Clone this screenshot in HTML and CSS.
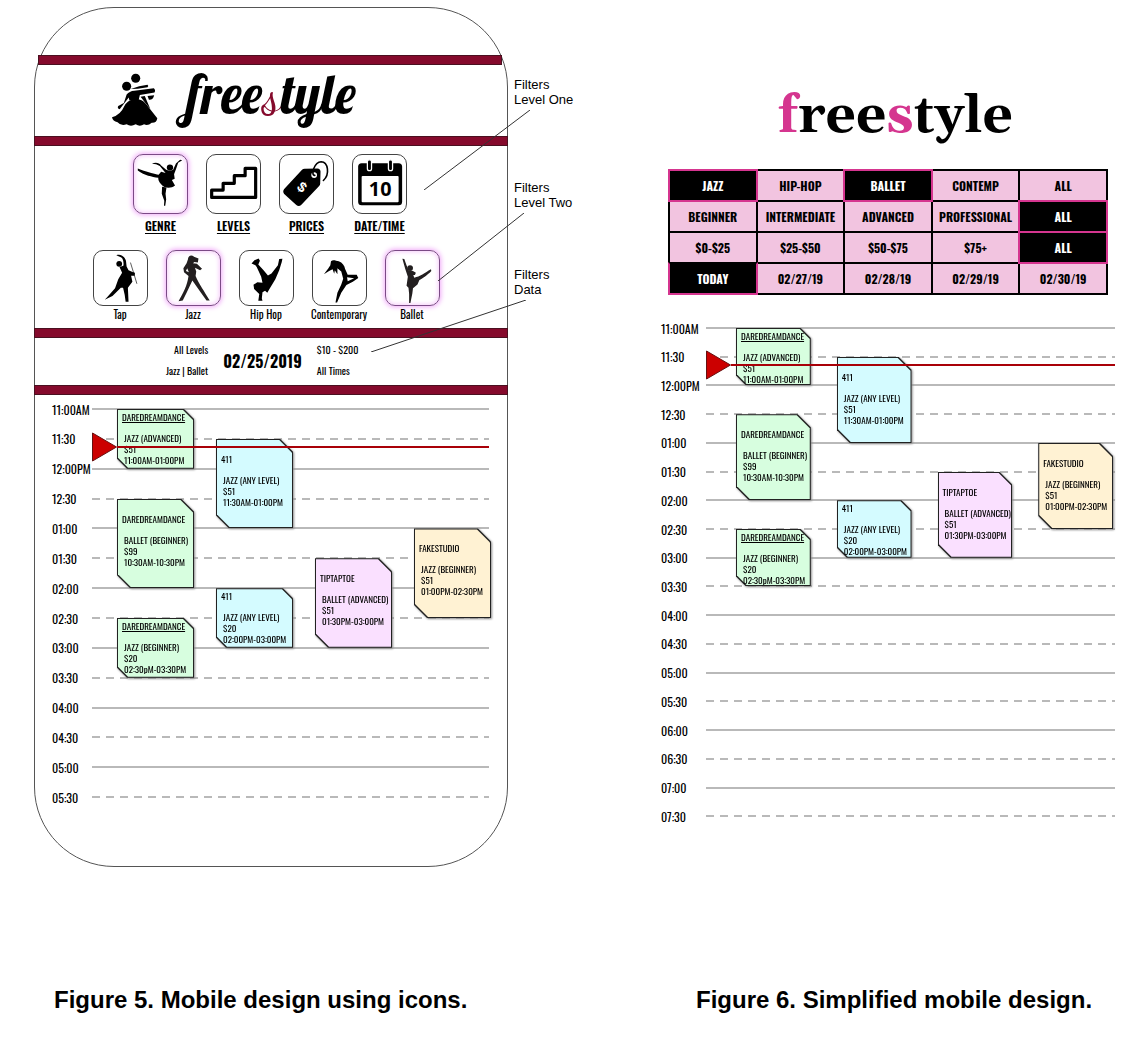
FILE: index.html
```html
<!DOCTYPE html>
<html lang="en">
<head>
<meta charset="utf-8">
<meta name="viewport" content="width=device-width, initial-scale=1">
<title>Freestyle mobile designs</title>
<link rel="stylesheet" href="styles.css">
</head>
<body>
<main class="figures">

  <figure class="figure figure-icons">
    <div class="device-wrap">
      <section class="phone">
        <div class="band band-top"></div>
        <header class="brand">
          <svg class="brand-mark" viewBox="248 224 132 152" aria-hidden="true">
            <circle cx="316" cy="239" r="13"/><circle cx="290" cy="262" r="13"/>
            <path d="M284 318C294 302 310 296 326 300Q340 304 348 316L378 354Q376 368 362 367Q350 377 340 371Q328 379 316 371Q302 379 290 371Q274 377 264 365Q250 363 248 351Q272 345 284 318Z"/>
            <path d="M302 270L326 262 350 258Q354 262 350 265L322 269Z"/>
            <path d="M290 286Q298 276 312 275L368 268Q374 273 370 280L328 287 324 303 298 303 296 294 270 328Q262 326 266 319L282 310Z"/>
            <path d="M330 292L342 290 358 327 346 313ZM350 290L369 288Q366 302 354 301Z"/>
          </svg>
          <h1 class="script-logo">free<span>s</span>tyle</h1>
        </header>
        <div class="band"></div>

        <div class="filters">
          <div class="filter-row main-filters">
            <button class="filter selected" type="button" aria-pressed="true">
              <svg class="tile" viewBox="144 28 168 182" aria-hidden="true">
                <circle cx="258" cy="67" r="10"/>
                <path d="M201 55C212 49 224 52 230 60L246 74 258 78 268 74 277 54 290 42 297 44 284 52 277 72 271 88 273 102 264 106 274 124C262 134 240 134 230 120 223 112 220 104 221 99 200 96 178 92 156 76L156 70 166 74C190 82 210 88 222 90L230 80 244 84 226 62 214 56Z"/>
                <path d="M233 128L247 130 244 150 246 168 243 188 239 188 240 172 232 150Z"/>
              </svg>
              <span>GENRE</span>
            </button>
            <button class="filter" type="button" aria-pressed="false">
              <svg class="tile" viewBox="364 28 163 182" aria-hidden="true">
                <path class="stairs" d="M377 161V138H413V117H448V93H482V70H515V161Z"/>
              </svg>
              <span>LEVELS</span>
            </button>
            <button class="filter" type="button" aria-pressed="false">
              <svg class="tile" viewBox="45 28 162 182" aria-hidden="true">
                <path d="M112 74Q115 71 120 71L160 70Q170 71 170 80L169 118Q169 122 165 126L110 184Q102 191 94 185L56 150Q50 143 56 135Z"/>
                <circle class="paper" cx="150" cy="91" r="9"/>
                <path class="ring" d="M152 92C138 92 150 50 172 49C194 50 200 88 179 108"/>
                <text class="price-sign" x="0" y="15" transform="translate(112 129) rotate(40)">$</text>
              </svg>
              <span>PRICES</span>
            </button>
            <button class="filter" type="button" aria-pressed="false">
              <svg class="tile" viewBox="259 28 162 182" aria-hidden="true">
                <rect x="273" y="54" width="138" height="132" rx="11"/>
                <rect class="paper" x="284" y="94" width="116" height="82" rx="3"/>
                <rect class="peg" x="302" y="43" width="13" height="34" rx="6"/>
                <rect class="peg" x="368" y="43" width="13" height="34" rx="6"/>
                <text class="day" x="342" y="158">10</text>
              </svg>
              <span>DATE/TIME</span>
            </button>
          </div>

          <div class="filter-row genre-filters">
            <button class="filter" type="button" aria-pressed="false">
              <svg class="tile" viewBox="26 316 162 168" aria-hidden="true">
                <circle cx="103" cy="356" r="9"/>
                <path d="M94 329C106 324 120 332 124 346L126 364 132 376 146 382 152 384 151 393 140 393 144 412 130 430 132 474 123 474 120 452 115 430 108 430 82 456 58 468 66 459 90 432 100 404 112 384 104 366 116 362C118 350 114 336 106 335Z"/>
                <path class="stick" d="M138 352L149 388 158 418"/>
              </svg>
              <span>Tap</span>
            </button>
            <button class="filter selected" type="button" aria-pressed="true">
              <svg class="tile soft-ink" viewBox="244 316 163 168" aria-hidden="true">
                <circle cx="319" cy="342" r="10"/>
                <path d="M311 334Q318 326 327 334L341 339 339 352 328 350 324 354 336 356 352 371 346 376 330 368 334 380 332 394C342 418 362 446 372 464L376 470 366 470 346 442 322 408 304 446 292 470 279 472C294 446 306 424 310 394L296 382 294 370 304 354Z"/>
                <path class="paper" d="M306 370L311 382 302 378Z"/>
              </svg>
              <span>Jazz</span>
            </button>
            <button class="filter" type="button" aria-pressed="false">
              <svg class="tile" viewBox="461 316 163 168" aria-hidden="true">
                <path d="M496 355L505 345 518 339 522 346 517 358 532 374 547 392 558 386 578 360 582 341 592 340 590 350 582 376 570 404 554 430 545 446 538 440 530 444 528 464 530 471 517 471 520 450 504 434 502 421 514 413 530 415 526 396 512 366 508 360Z"/>
              </svg>
              <span>Hip Hop</span>
            </button>
            <button class="filter" type="button" aria-pressed="false">
              <svg class="tile" viewBox="139 316 163 168" aria-hidden="true">
                <path fill-rule="evenodd" d="M194 348C200 342 210 347 218 348 230 352 236 362 238 372L246 390 274 390 279 400 262 412 242 422 226 446 213 476 208 476 214 446 226 420 232 402 226 380 214 370 214 388 206 376 204 387 199 373 188 378 172 388 186 370 192 360ZM244 398L246 410 266 401Z"/>
              </svg>
              <span>Contemporary</span>
            </button>
            <button class="filter selected" type="button" aria-pressed="true">
              <svg class="tile soft-ink" viewBox="357 316 163 168" aria-hidden="true">
                <circle cx="431" cy="369" r="9"/>
                <path d="M407 340L413 341 419 358 426 376 440 378 449 384 446 391 441 391 444 399C462 396 476 384 496 373L497 378C484 392 468 402 460 406L454 420 440 432 438 448 432 478 428 478 428 450 426 430 420 424 424 396 416 372Z"/>
              </svg>
              <span>Ballet</span>
            </button>
          </div>
        </div>
        <div class="band"></div>

        <div class="summary">
          <div class="summary-side summary-left"><span>All Levels</span><span>Jazz | Ballet</span></div>
          <strong>02/25/2019</strong>
          <div class="summary-side"><span>$10 - $200</span><span>All Times</span></div>
        </div>
        <div class="band"></div>

        <div class="schedule">
          <ol class="slots">
            <li>11:00AM</li><li>11:30</li><li>12:00PM</li><li>12:30</li><li>01:00</li><li>01:30</li><li>02:00</li>
            <li>02:30</li><li>03:00</li><li>03:30</li><li>04:00</li><li>04:30</li><li>05:00</li><li>05:30</li>
          </ol>
          <div class="events">
            <article class="card green short linked col-1 at-1100"><h3>DAREDREAMDANCE</h3><p>JAZZ (ADVANCED)<br>$51<br>11:00AM-01:00PM</p></article>
            <article class="card blue col-2 at-1130"><h3>411</h3><p>JAZZ (ANY LEVEL)<br>$51<br>11:30AM-01:00PM</p></article>
            <article class="card green col-1 at-1230"><h3>DAREDREAMDANCE</h3><p>BALLET (BEGINNER)<br>$99<br>10:30AM-10:30PM</p></article>
            <article class="card yellow col-4 at-0100"><h3>FAKESTUDIO</h3><p>JAZZ (BEGINNER)<br>$51<br>01:00PM-02:30PM</p></article>
            <article class="card violet col-3 at-0130"><h3>TIPTAPTOE</h3><p>BALLET (ADVANCED)<br>$51<br>01:30PM-03:00PM</p></article>
            <article class="card blue short col-2 at-0200"><h3>411</h3><p>JAZZ (ANY LEVEL)<br>$20<br>02:00PM-03:00PM</p></article>
            <article class="card green short linked col-1 at-0230"><h3>DAREDREAMDANCE</h3><p>JAZZ (BEGINNER)<br>$20<br>02:30pM-03:30PM</p></article>
          </div>
          <div class="now"><svg viewBox="0 0 25 30" aria-hidden="true"><path d="M.5 1L24.5 15 .5 29Z"/></svg></div>
        </div>
      </section>

      <aside class="callouts">
        <p class="callout">Filters<br>Level One<svg class="lead lead-one" viewBox="0 0 106 80" aria-hidden="true"><path d="M106 0L0 80"/></svg></p>
        <p class="callout">Filters<br>Level Two<svg class="lead lead-two" viewBox="0 0 86 68" aria-hidden="true"><path d="M86 0L0 68"/></svg></p>
        <p class="callout">Filters<br>Data<svg class="lead lead-data" viewBox="0 0 155 52" aria-hidden="true"><path d="M155 0L0 52"/></svg></p>
      </aside>
    </div>
    <figcaption>Figure 5. Mobile design using icons.</figcaption>
  </figure>

  <figure class="figure figure-simple">
    <h1 class="serif-logo"><span>f</span>ree<span>s</span>tyle</h1>
    <div class="options">
      <button type="button" aria-pressed="true">JAZZ</button>
      <button type="button" aria-pressed="false">HIP-HOP</button>
      <button type="button" aria-pressed="true">BALLET</button>
      <button type="button" aria-pressed="false">CONTEMP</button>
      <button type="button" aria-pressed="false">ALL</button>
      <button type="button" aria-pressed="false">BEGINNER</button>
      <button type="button" aria-pressed="false">INTERMEDIATE</button>
      <button type="button" aria-pressed="false">ADVANCED</button>
      <button type="button" aria-pressed="false">PROFESSIONAL</button>
      <button type="button" aria-pressed="true">ALL</button>
      <button type="button" aria-pressed="false">$0-$25</button>
      <button type="button" aria-pressed="false">$25-$50</button>
      <button type="button" aria-pressed="false">$50-$75</button>
      <button type="button" aria-pressed="false">$75+</button>
      <button type="button" aria-pressed="true">ALL</button>
      <button class="today" type="button" aria-pressed="true">TODAY</button>
      <button type="button" aria-pressed="false">02/27/19</button>
      <button type="button" aria-pressed="false">02/28/19</button>
      <button type="button" aria-pressed="false">02/29/19</button>
      <button type="button" aria-pressed="false">02/30/19</button>
    </div>

    <div class="schedule schedule-long">
      <ol class="slots">
        <li>11:00AM</li><li>11:30</li><li>12:00PM</li><li>12:30</li><li>01:00</li><li>01:30</li>
        <li>02:00</li><li>02:30</li><li>03:00</li><li>03:30</li><li>04:00</li><li>04:30</li>
        <li>05:00</li><li>05:30</li><li>06:00</li><li>06:30</li><li>07:00</li><li>07:30</li>
      </ol>
      <div class="events">
        <article class="card green short linked col-1 at-1100"><h3>DAREDREAMDANCE</h3><p>JAZZ (ADVANCED)<br>$51<br>11:00AM-01:00PM</p></article>
        <article class="card blue col-2 at-1130"><h3>411</h3><p>JAZZ (ANY LEVEL)<br>$51<br>11:30AM-01:00PM</p></article>
        <article class="card green col-1 at-1230"><h3>DAREDREAMDANCE</h3><p>BALLET (BEGINNER)<br>$99<br>10:30AM-10:30PM</p></article>
        <article class="card yellow col-4 at-0100"><h3>FAKESTUDIO</h3><p>JAZZ (BEGINNER)<br>$51<br>01:00PM-02:30PM</p></article>
        <article class="card violet col-3 at-0130"><h3>TIPTAPTOE</h3><p>BALLET (ADVANCED)<br>$51<br>01:30PM-03:00PM</p></article>
        <article class="card blue short col-2 at-0200"><h3>411</h3><p>JAZZ (ANY LEVEL)<br>$20<br>02:00PM-03:00PM</p></article>
        <article class="card green short linked col-1 at-0230"><h3>DAREDREAMDANCE</h3><p>JAZZ (BEGINNER)<br>$20<br>02:30pM-03:30PM</p></article>
      </div>
      <div class="now"><svg viewBox="0 0 25 30" aria-hidden="true"><path d="M.5 1L24.5 15 .5 29Z"/></svg></div>
    </div>
    <figcaption>Figure 6. Simplified mobile design.</figcaption>
  </figure>

</main>
</body>
</html>
```
FILE: styles.css
```css
:root {
  --wine: #850a2c;
  --pink: #d5358f;
  --narrow: Oswald, "Roboto Condensed", "Liberation Sans Narrow", Roboto, sans-serif;
}

* { box-sizing: border-box; }

body {
  margin: 0;
  background: #fff;
  color: #000;
  font-family: "Liberation Sans", Arial, sans-serif;
}

h1, h3, p, ol, figure { margin: 0; padding: 0; }
button { font: inherit; color: inherit; cursor: pointer; }

.figures {
  display: grid;
  grid-template-columns: 1fr 1fr;
  padding: 7px 0 24px;
}

.figure { display: flex; flex-direction: column; min-width: 0; }
.figure-icons { padding-left: 34px; }
.figure-simple { padding: 0 33px 0 87px; }

figcaption {
  margin-top: auto;
  font-size: 24px;
  line-height: 28px;
  font-weight: bold;
  white-space: nowrap;
}
.figure-icons figcaption { padding-left: 20px; }
.figure-simple figcaption { padding-left: 35px; }

/* Phone */
.device-wrap { display: flex; gap: 6px; margin-bottom: 119px; }

.phone {
  flex: 1;
  min-width: 0;
  padding: 47px 0 49px;
  border: 1px solid #555;
  border-radius: 80px;
}

.band {
  height: 10px;
  margin: 0 -1px;
  background: var(--wine);
  border: 1px solid #4a1020;
}
.band-top { margin: 0 5px 0 3px; }

.brand {
  display: flex;
  gap: 29px;
  height: 71px;
  padding: 8px 0 0 77px;
}
.brand-mark { width: 46px; height: 53px; }
.script-logo {
  font: 54px/42px Lobster, "Liberation Serif", "Times New Roman", serif;
}
.script-logo span {
  color: var(--wine);
  font-family: "Dancing Script", "Great Vibes", "Lobster Two", "Liberation Serif", cursive;
}

/* Icon filters */
.filters { padding: 8px 0 7px; }
.filter-row { display: grid; justify-content: center; font-family: var(--narrow); }
.main-filters { grid-template-columns: repeat(4, 73px); padding-right: 2px; }
.genre-filters { grid-template-columns: repeat(5, 73px); margin-top: 16px; padding-right: 10px; }

.filter {
  display: flex;
  flex-direction: column;
  align-items: center;
  padding: 0;
  border: 0;
  background: none;
  white-space: nowrap;
}
.tile {
  width: 55px;
  height: 60px;
  border: 1px solid #444;
  border-radius: 10px;
}
.genre-filters .tile { height: 56px; }
.selected .tile {
  border-color: #7b4a86;
  box-shadow: 0 0 5px 1px #f0a8f8, inset 0 0 4px 1px #f6ccfa;
}
.main-filters span {
  margin-top: 4px;
  font-size: 12px;
  line-height: 16px;
  font-weight: 600;
  text-decoration: underline;
  text-underline-offset: 2px;
}
.genre-filters span { margin-top: 1px; font-size: 11px; line-height: 14px; }

.soft-ink { fill: #231f20; }
.paper { fill: #fff; }
.stairs { fill: none; stroke: #000; stroke-width: 10; stroke-linejoin: round; }
.stick { fill: none; stroke: #000; stroke-width: 2; }
.ring { fill: none; stroke: #000; stroke-width: 5; stroke-linecap: round; }
.peg { fill: #000; stroke: #fff; stroke-width: 4; }
.price-sign { fill: #fff; font: bold 44px "Liberation Sans", sans-serif; text-anchor: middle; }
.day { font: bold 62px "Open Sans", sans-serif; text-anchor: middle; }

/* Chosen filters */
.summary {
  display: grid;
  grid-template-columns: 1fr auto 1fr;
  align-items: center;
  gap: 15px;
  height: 47px;
  padding: 0 17px 2px 0;
  font-family: var(--narrow);
}
.summary strong { font-size: 16px; line-height: 24px; }
.summary-side { display: grid; gap: 7px; font-size: 10px; line-height: 14px; }
.summary-left { text-align: right; }

/* Schedule */
.schedule {
  --gutter: 40px;
  position: relative;
  margin: 4px 18px 0 17px;
  font-family: var(--narrow);
}
.slots {
  display: grid;
  grid-auto-rows: 1fr;
  min-height: 418px;
  list-style: none;
  font-size: 12px;
}
.slots li {
  display: grid;
  grid-template-columns: var(--gutter) 1fr;
  align-items: center;
  height: 20px;
  white-space: nowrap;
}
.slots li::after { content: ""; height: 2px; background: #b9b9b9; }
.slots li:nth-child(even)::after {
  background: repeating-linear-gradient(90deg, #b9b9b9 0 8px, transparent 8px 14px);
}

.events {
  position: absolute;
  inset: 10px -2px -10px 65px;
  display: grid;
  grid-template-columns: repeat(4, minmax(0, 1fr));
  grid-template-rows: repeat(14, minmax(0, 1fr));
  column-gap: 22px;
}

.card {
  --cut: 13px;
  position: relative;
  grid-row-end: span 3;
  padding: 15px 0 0 5px;
  font-size: 9px;
  line-height: 11px;
  white-space: nowrap;
  filter: drop-shadow(1px 1px 1px #888);
}
.card::before, .card::after {
  content: "";
  position: absolute;
  z-index: -1;
  inset: 0;
  background: #222;
  clip-path: polygon(0 0, calc(100% - var(--cut)) 0, 100% var(--cut), 100% 100%, var(--cut) 100%, 0 calc(100% - var(--cut)));
}
.card::after { inset: 1px; background: var(--fill); }
.card h3 { font-size: inherit; font-weight: normal; }
.card p { margin-top: 10px; padding-left: 2px; }
.short { --cut: 10px; grid-row-end: span 2; padding-top: 3px; }
.linked h3 { text-decoration: underline; }

.green { --fill: #d7fedf; }
.blue { --fill: #d4fbff; }
.violet { --fill: #fae0ff; }
.yellow { --fill: #fff2d3; }

.col-1 { grid-column: 1; }
.col-2 { grid-column: 2; }
.col-3 { grid-column: 3; }
.col-4 { grid-column: 4; }
.at-1100 { grid-row-start: 1; }
.at-1130 { grid-row-start: 2; }
.at-1230 { grid-row-start: 4; }
.at-0100 { grid-row-start: 5; }
.at-0130 { grid-row-start: 6; }
.at-0200 { grid-row-start: 7; }
.at-0230 { grid-row-start: 8; }

.now {
  position: absolute;
  top: 33px;
  left: var(--gutter);
  right: 0;
  display: flex;
  align-items: center;
}
.now svg { width: 25px; height: 30px; fill: #c00; stroke: #611; }
.now::after { content: ""; flex: 1; height: 2px; background: #a90008; }

/* Callouts beside the phone */
.callouts { flex: none; width: 60px; padding-top: 70px; font-size: 13px; line-height: 15px; }
.callout { position: relative; white-space: nowrap; }
.callout + .callout { margin-top: 73px; }
.callout + .callout + .callout { margin-top: 57px; }
.lead { position: absolute; top: 33px; fill: none; stroke: #333; }
.lead-one { left: -90px; width: 106px; height: 80px; }
.lead-two { left: -76px; width: 86px; height: 68px; }
.lead-data { left: -143px; width: 155px; height: 52px; }

/* Simplified design */
.serif-logo {
  padding: 77px 0 0 14px;
  font: bold 53px/66px Gelasio, Georgia, "Liberation Serif", serif;
  text-align: center;
}
.serif-logo span { color: var(--pink); }

.options {
  display: grid;
  grid-template-columns: repeat(5, minmax(0, 1fr));
  grid-auto-rows: 31px;
  margin: 19px 9px 0 7px;
  font: bold 12px/16px var(--narrow);
}
.options button {
  position: relative;
  margin: 0 -2px -2px 0;
  padding: 0;
  border: 2px solid #000;
  background: #f2c4e0;
}
.options button[aria-pressed="true"] {
  z-index: 1;
  border-color: var(--pink);
  background: #000;
  color: #fff;
}
.options .today[aria-pressed="true"] { border-top-color: #000; }

.schedule-long { --gutter: 45px; margin: 25px 0 0; }
.schedule-long .slots { min-height: 517px; }
.schedule-long .events {
  inset: 10px 2px -10px 75px;
  grid-template-rows: repeat(18, minmax(0, 1fr));
  column-gap: 26px;
}
.schedule-long .now { top: 32px; }
```
